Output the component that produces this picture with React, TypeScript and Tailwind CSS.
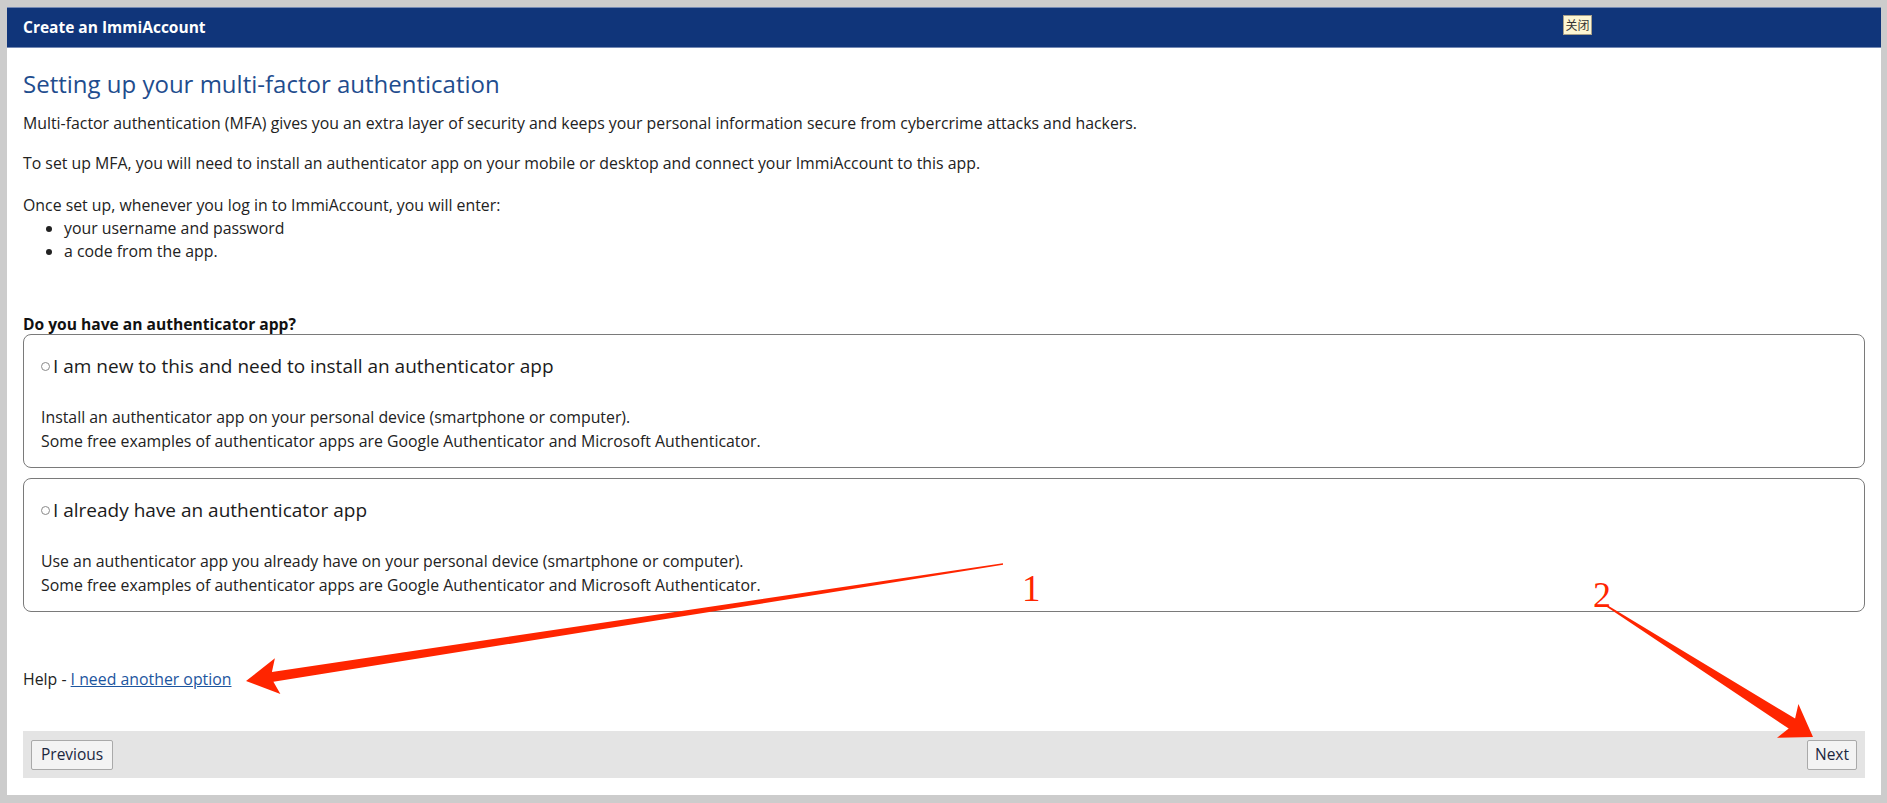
import React from 'react';

type Pt = [number, number];

// builds a tapered arrow polygon from tail to tip
const arrowPoints = (tail: Pt, tip: Pt, headLen: number, headHalf: number, shaftHalf: number, tailHalf: number) => {
  const dx = tip[0] - tail[0];
  const dy = tip[1] - tail[1];
  const len = Math.sqrt(dx * dx + dy * dy);
  const ux = dx / len;
  const uy = dy / len;
  const nx = -uy;
  const ny = ux;
  const bx = tip[0] - ux * headLen;
  const by = tip[1] - uy * headLen;
  // shaft meets the head a little behind the barbs
  const jx = bx + ux * 5;
  const jy = by + uy * 5;
  const pts: Pt[] = [
    [tail[0] + nx * tailHalf, tail[1] + ny * tailHalf],
    [jx + nx * shaftHalf, jy + ny * shaftHalf],
    [bx + nx * headHalf, by + ny * headHalf],
    tip,
    [bx - nx * headHalf, by - ny * headHalf],
    [jx - nx * shaftHalf, jy - ny * shaftHalf],
    [tail[0] - nx * tailHalf, tail[1] - ny * tailHalf],
  ];
  return pts.map((p) => `${p[0].toFixed(1)},${p[1].toFixed(1)}`).join(' ');
};

const OptionBox: React.FC<{ title: string; lines: string[] }> = ({ title, lines }) => (
  <div className="border border-[#7a7a7a] rounded-[8px] pl-[17px] pr-4 pt-[18px] pb-[14px]">
    <label className="flex items-center text-[19px] leading-[26px] text-[#1b1b1b]">
      <span className="inline-block w-[9px] h-[9px] rounded-full border border-[#8a8a8a] mr-[3px] mt-[1px]"></span>
      {title}
    </label>
    <div className="mt-[26px] text-[15.85px] leading-[24px] text-[#222]">
      {lines.map((l) => (
        <div key={l}>{l}</div>
      ))}
    </div>
  </div>
);

const App: React.FC = () => {
  return (
    <div className="relative h-[803px] bg-[#cccccc] pt-[7px] pl-[7px] pr-[6px] pb-[8px] font-['Open_Sans','Liberation_Sans',sans-serif]">
      <div className="h-full bg-white flex flex-col">
        {/* Title bar */}
        <div className="h-[41px] bg-[#10357a] border-y border-[#7489b4] flex items-center pl-4">
          <span className="text-white font-bold text-[15.5px]">Create an ImmiAccount</span>
          <button className="ml-auto mr-[289px] -mt-[6px] h-[20px] w-[29px] bg-[#fdf6d3] border border-[#a8a08a] text-[12px] leading-none text-[#333] font-['Noto_Sans_CJK_SC',sans-serif]">
            关闭
          </button>
        </div>

        <div className="px-4 text-[#222]">
          <h1 className="mt-[20px] text-[24px] leading-[32px] text-[#1f4d8e]">
            Setting up your multi-factor authentication
          </h1>
          <p className="mt-[12px] text-[15.85px] leading-[23px]">
            Multi-factor authentication (MFA) gives you an extra layer of security and keeps your personal information secure from cybercrime attacks and hackers.
          </p>
          <p className="mt-[17px] text-[15.85px] leading-[23px]">
            To set up MFA, you will need to install an authenticator app on your mobile or desktop and connect your ImmiAccount to this app.
          </p>
          <p className="mt-[19px] text-[15.85px] leading-[23px]">
            Once set up, whenever you log in to ImmiAccount, you will enter:
          </p>
          <ul className="list-disc pl-[41px] text-[15.85px] leading-[23px]">
            <li>your username and password</li>
            <li>a code from the app.</li>
          </ul>

          <div className="mt-[51px] font-bold text-[15.6px] leading-[20px] text-[#111]">Do you have an authenticator app?</div>
          <div className="flex flex-col gap-[10px]">
            <OptionBox
              title="I am new to this and need to install an authenticator app"
              lines={[
                'Install an authenticator app on your personal device (smartphone or computer).',
                'Some free examples of authenticator apps are Google Authenticator and Microsoft Authenticator.',
              ]}
            />
            <OptionBox
              title="I already have an authenticator app"
              lines={[
                'Use an authenticator app you already have on your personal device (smartphone or computer).',
                'Some free examples of authenticator apps are Google Authenticator and Microsoft Authenticator.',
              ]}
            />
          </div>

          <div className="mt-[56px] text-[15.85px] leading-[23px]">
            Help - <a className="text-[#1d56a0] underline" href="#">I need another option</a>
          </div>

          <div className="mt-[40px] h-[47px] bg-[#e4e4e4] flex items-center justify-between px-[8px]">
            <button className="h-[30px] px-[9px] bg-[#f3f3f3] border border-[#a9a9a9] rounded-[2px] text-[15.5px] text-[#1c2740]">
              Previous
            </button>
            <button className="h-[30px] px-[7px] bg-[#f3f3f3] border border-[#a9a9a9] rounded-[2px] text-[15.5px] text-[#1c2740]">
              Next
            </button>
          </div>
        </div>
      </div>

      {/* annotation overlay */}
      <svg className="absolute top-0 left-0 pointer-events-none" width="1887" height="803" viewBox="0 0 1887 803">
        <polygon points={arrowPoints([1003, 564], [246, 681], 32, 18, 5, 0.8)} fill="#ff2500" />
        <polygon points={arrowPoints([1607, 606], [1813, 737], 30, 20, 6, 0.8)} fill="#ff2500" />
        <text x="1022" y="601" fill="#ff2500" fontSize="37" fontFamily="Liberation Serif, serif">1</text>
        <text x="1593" y="607" fill="#ff2500" fontSize="36" fontFamily="Liberation Serif, serif">2</text>
      </svg>
    </div>
  );
};

export default App;
